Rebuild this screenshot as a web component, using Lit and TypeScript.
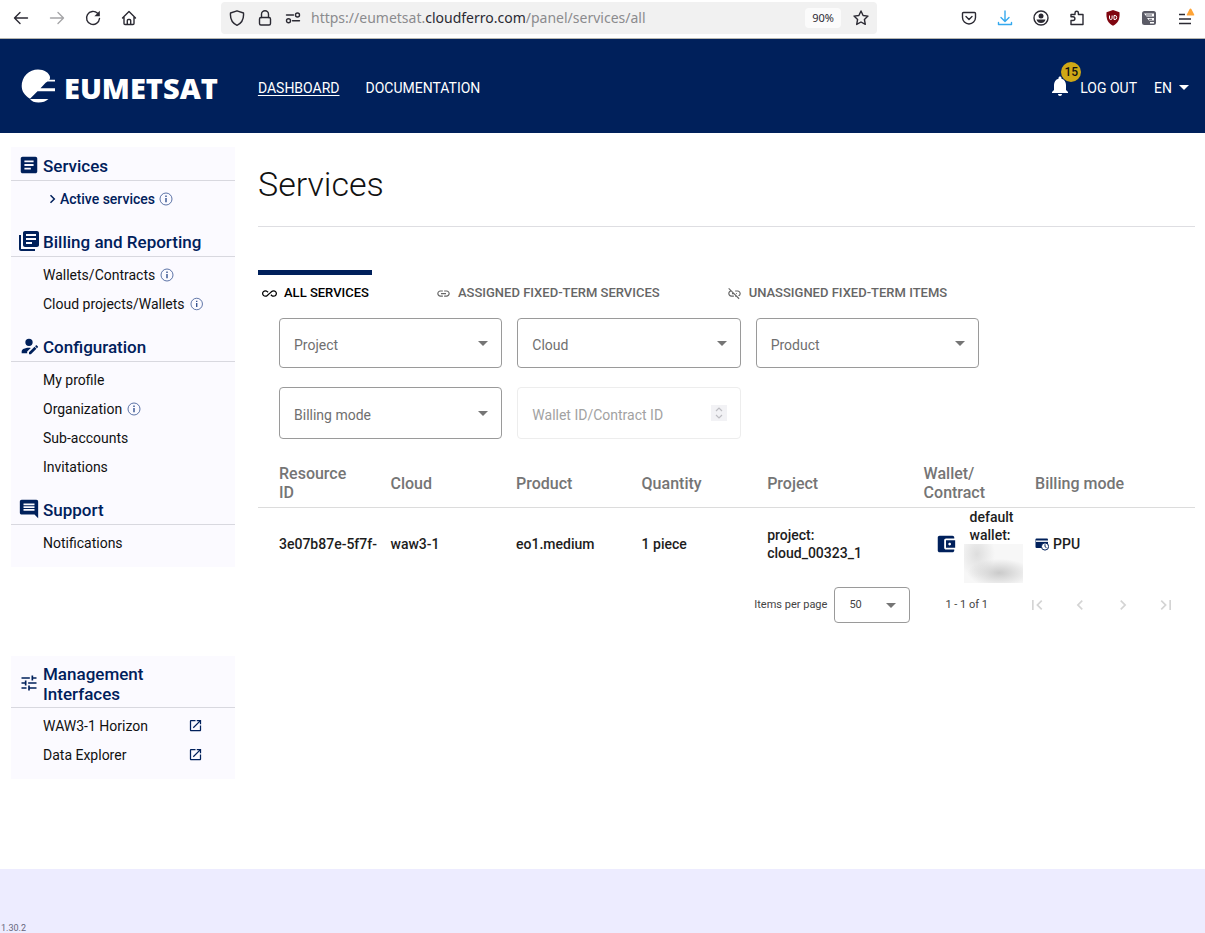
import { LitElement, html, css, svg } from "lit";
import { customElement } from "lit/decorators.js";

const P = {
  article: "M19 3H5c-1.1 0-2 .9-2 2v14c0 1.1.9 2 2 2h14c1.1 0 2-.9 2-2V5c0-1.1-.9-2-2-2zm-5 14H7v-2h7v2zm3-4H7v-2h10v2zm0-4H7V7h10v2z",
  books: "M4 6H2v14c0 1.1.9 2 2 2h14v-2H4V6zm16-4H8c-1.1 0-2 .9-2 2v12c0 1.1.9 2 2 2h12c1.1 0 2-.9 2-2V4c0-1.1-.9-2-2-2zm-1 9H9V9h10v2zm-4 4H9v-2h6v2zm4-8H9V5h10v2z",
  userEdit: "M21.7 13.35l-1 1-2.05-2.05 1-1c.21-.21.56-.21.77 0l1.28 1.28c.21.21.21.56 0 .77M12 18.94l6.06-6.06 2.05 2.05L14.06 21H12v-2.06M12 14c-4.42 0-8 1.79-8 4v2h6v-1.89l4-4c-.66-.08-1.33-.11-2-.11m0-10a4 4 0 0 0-4 4 4 4 0 0 0 4 4 4 4 0 0 0 4-4 4 4 0 0 0-4-4z",
  comment: "M21.99 4c0-1.1-.89-2-1.99-2H4c-1.1 0-2 .9-2 2v12c0 1.1.9 2 2 2h14l4 4-.01-18zM18 14H6v-2h12v2zm0-3H6V9h12v2zm0-3H6V6h12v2z",
  tune: "M3 17v2h6v-2H3zM3 5v2h10V5H3zm10 16v-2h8v-2h-8v-2h-2v6h2zM7 9v2H3v2h4v2h2V9H7zm14 4v-2H11v2h10zm-6-4h2V7h4V5h-4V3h-2v6z",
  open: "M19 19H5V5h7V3H5c-1.11 0-2 .9-2 2v14c0 1.1.89 2 2 2h14c1.1 0 2-.9 2-2v-7h-2v7zM14 3v2h3.59l-9.83 9.83 1.41 1.41L19 6.41V10h2V3h-7z",
  bell: "M12 22c1.1 0 2-.9 2-2h-4c0 1.1.89 2 2 2zm6-6v-5c0-3.07-1.64-5.64-4.5-6.32V4c0-.83-.67-1.5-1.5-1.5s-1.5.67-1.5 1.5v.68C7.63 5.36 6 7.92 6 11v5l-2 2v1h16v-1l-2-2z",
  infinite: "M18.6 6.62c-1.44 0-2.8.56-3.77 1.53L12 10.66 10.48 12h.01L7.8 14.39c-.64.64-1.49.99-2.4.99-1.87 0-3.39-1.51-3.39-3.38S3.53 8.62 5.4 8.62c.91 0 1.76.35 2.44 1.03l1.13 1 1.51-1.34L9.22 8.2C8.2 7.18 6.84 6.62 5.4 6.62 2.42 6.62 0 9.04 0 12s2.42 5.38 5.4 5.38c1.44 0 2.8-.56 3.77-1.53l2.83-2.5.01.01L13.52 12h-.01l2.69-2.39c.64-.64 1.49-.99 2.4-.99 1.87 0 3.39 1.51 3.39 3.38s-1.52 3.38-3.39 3.38c-.9 0-1.76-.35-2.44-1.03l-1.14-1.01-1.51 1.34 1.27 1.12c1.02 1.01 2.37 1.57 3.82 1.57 2.98 0 5.4-2.41 5.4-5.38s-2.42-5.37-5.4-5.37z",
  link: "M3.9 12c0-1.71 1.39-3.1 3.1-3.1h4V7H7c-2.76 0-5 2.24-5 5s2.24 5 5 5h4v-1.9H7c-1.71 0-3.1-1.39-3.1-3.1zM8 13h8v-2H8v2zm9-6h-4v1.9h4c1.71 0 3.1 1.39 3.1 3.1s-1.39 3.1-3.1 3.1h-4V17h4c2.76 0 5-2.24 5-5s-2.24-5-5-5z",
  linkOff: "M17 7h-4v1.9h4c1.71 0 3.1 1.39 3.1 3.1 0 1.43-.98 2.63-2.31 2.98l1.46 1.46C20.88 15.61 22 13.95 22 12c0-2.76-2.24-5-5-5zm-1 4h-2.19l2 2H16zM2 4.27l3.11 3.11C3.29 8.12 2 9.91 2 12c0 2.76 2.24 5 5 5h4v-1.9H7c-1.71 0-3.1-1.39-3.1-3.1 0-1.59 1.21-2.9 2.76-3.07L8.73 11H8v2h2.73L13 15.27V17h1.73l4.01 4L20 19.74 3.27 3 2 4.27z",
  wallet: "M21 18v1c0 1.1-.9 2-2 2H5c-1.11 0-2-.9-2-2V5c0-1.1.89-2 2-2h14c1.1 0 2 .9 2 2v1h-9c-1.11 0-2 .9-2 2v8c0 1.1.89 2 2 2h9zm-9-2h10V8H12v8zm4-2.5c-.83 0-1.5-.67-1.5-1.5s.67-1.5 1.5-1.5 1.5.67 1.5 1.5-.67 1.5-1.5 1.5z",
  first: "M18.41 16.59L13.82 12l4.59-4.59L17 6l-6 6 6 6zM6 6h2v12H6z",
  prev: "M15.41 7.41L14 6l-6 6 6 6 1.41-1.41L10.83 12z",
  next: "M10 6L8.59 7.41 13.17 12l-4.58 4.59L10 18l6-6z",
  last: "M5.59 7.41L10.18 12l-4.59 4.59L7 18l6-6-6-6zM16 6h2v12h-2z",
};

const icon = (d: string, size: number) =>
  html`<svg width=${size} height=${size} viewBox="0 0 24 24" fill="currentColor" aria-hidden="true"><path d=${d}></path></svg>`;

const line = (body: unknown, w = 16, h = 16) =>
  html`<svg width=${w} height=${h} viewBox="0 0 ${w} ${h}" fill="none" stroke="currentColor" stroke-width="1.4" stroke-linecap="round" stroke-linejoin="round" aria-hidden="true">${body}</svg>`;

const caret = html`<svg class="caret" width="10" height="5" viewBox="0 0 10 5" fill="currentColor" aria-hidden="true"><path d="M0 0h10L5 5z"></path></svg>`;

const info = html`<svg width="14" height="14" viewBox="0 0 14 14" fill="none" stroke="#33508f" aria-hidden="true"><circle cx="7" cy="7" r="6" stroke-width=".8"></circle><path d="M7 6v4.200M7 3.600v1.300" stroke-width="1.400"></path></svg>`;

@customElement("browser-bar")
export class BrowserBar extends LitElement {
  static styles = css`
    :host { display: block; font-family: "Noto Sans", sans-serif; color: #2b2a33; }
    .bar { display: grid; grid-template-columns: 221px minmax(0, 656px) 1fr; height: 38px; align-items: start; background: #fff; border-bottom: 1px solid #b5b5ae; }
    .group { display: flex; align-items: center; height: 36px; }
    .left { padding-left: 13px; gap: 20px; }
    .right { justify-content: flex-end; padding-right: 10px; gap: 20px; }
    button { display: flex; padding: 0; border: 0; background: none; color: inherit; }
    .off { color: #a5a5a8; }
    .sky { color: #35a9ee; }
    .address { display: flex; align-items: center; gap: 10px; height: 32px; margin-top: 2px; padding: 0 8px; border-radius: 4px; background: #f1f1f1; }
    .flags { display: flex; gap: 12px; }
    .url { flex: 1; min-width: 0; margin: 0; font-size: 14px; line-height: 20px; color: #8b8b8e; white-space: nowrap; }
    .url b { font-weight: 400; color: #2b2a33; }
    .zoom { padding: 0 7px; margin-right: 2px; border-radius: 4px; background: #fbfbfb; font: 11px/20px "Noto Sans", sans-serif; }
  `;
  render() {
    return html`
      <nav class="bar" aria-label="Browser">
        <div class="group left">
          <button aria-label="Back">${line(svg`<path d="M1.500 8h13M7 2.500L1.500 8L7 13.500"></path>`)}</button>
          <button class="off" aria-label="Forward">${line(svg`<path d="M14.500 8h-13M9 2.500L14.500 8L9 13.500"></path>`)}</button>
          <button aria-label="Reload">${line(svg`<path d="M12.600 3.300A6.500 6.500 0 1 0 14.500 8.500"></path><path d="M14.800 .8v5.400H9.400z" fill="currentColor" stroke="none"></path>`)}</button>
          <button aria-label="Home">${line(svg`<path d="M1.500 8L8 1.500L14.500 8M3 7v6.500q0 1 1 1h8q1 0 1-1V7M6.300 14.500v-4q0-1 1-1h1.400q1 0 1 1v4"></path>`)}</button>
        </div>
        <div class="address">
          <div class="flags">
            ${line(svg`<path d="M8 .8L14.500 3c.5 6-1.500 10-6.500 12.300C3 13 1 9 1.500 3z"></path>`)}
            ${line(svg`<rect x="2.500" y="7.500" width="11" height="7.500" rx="1.500"></rect><path d="M4.500 7.500V4.300a3.500 3.500 0 0 1 7 0v3.200"></path>`)}
            ${line(svg`<path d="M1.500 5h7M7.500 10.800h7"></path><circle cx="12.500" cy="5" r="2"></circle><circle cx="3.500" cy="10.800" r="2"></circle>`)}
          </div>
          <p class="url">https://eumetsat.<b>cloudferro.com</b>/panel/services/all</p>
          <button class="zoom">90%</button>
          <button aria-label="Bookmark">${line(svg`<path d="M8 1l2.100 4.500 4.900.6-3.600 3.400.9 4.900L8 12l-4.300 2.400.9-4.900L1 6.100l4.900-.6z"></path>`)}</button>
        </div>
        <div class="group right">
          <button aria-label="Pocket">${line(svg`<path d="M2.500 2.500h11q1 0 1 1V7.500a6.500 6.500 0 0 1-13 0V3.500q0-1 1-1zM5 6.500l3 3 3-3"></path>`)}</button>
          <button class="sky" aria-label="Downloads">${line(svg`<path d="M8 1v10M4 7.500L8 11.500l4-4M1.500 12.500v2h13v-2"></path>`)}</button>
          <button aria-label="Account">${line(svg`<circle cx="8" cy="8" r="7"></circle><circle cx="8" cy="6" r="2.500" fill="currentColor" stroke="none"></circle><path d="M3.500 9.500h9q-1 3.500-4.500 3.500T3.500 9.500z" fill="currentColor" stroke="none"></path>`)}</button>
          <button aria-label="Extensions">${line(svg`<path d="M2 14.500v-4h2a1.800 1.800 0 0 0 0-3.800H2V4.500h4V3a1.700 1.700 0 0 1 3.400 0v1.500h4.600v10z"></path>`)}</button>
          <button aria-label="Content blocker"><svg width="16" height="16" viewBox="0 0 16 16" aria-hidden="true"><path d="M8 0l6.500 2.300c.5 7-1.500 11-6.500 13.500C3 13.300 1 9.300 1.500 2.300z" fill="#800610"></path><path d="M4.500 5.500v2.700q0 1.300 1.300 1.300t1.300-1.300V5.500M9 5.500v4h1q1.700 0 1.700-2t-1.700-2z" stroke="#fff" fill="none"></path></svg></button>
          <button aria-label="Notes"><svg width="16" height="16" viewBox="0 0 16 16" aria-hidden="true"><rect x="1" y="1" width="14" height="14" rx="2.500" fill="#5b5b66"></rect><path d="M3 3.500h10v3H5.500zM6 8h7v2.500H8zM9 12h4v1.500H9z" fill="#fff"></path><path d="M5 5h6M8 9.300h3" stroke="#5b5b66"></path></svg></button>
          <button aria-label="Menu"><svg width="18" height="22" viewBox="0 0 18 22" aria-hidden="true"><path d="M2 7.500h6M2 12h12M2 16.500h12" stroke="#2b2a33" stroke-width="1.400" fill="none"></path><path d="M13.500 1.500q.6 0 1 .8l2.700 5.200q.5 1-.6 1h-6.200q-1.100 0-.6-1l2.700-5.200q.4-.8 1-.8z" fill="#ffa436"></path></svg></button>
        </div>
      </nav>`;
  }
}

@customElement("site-header")
export class SiteHeader extends LitElement {
  static styles = css`
    :host { display: block; background: #00205b; color: #fff; font-family: Roboto, sans-serif; }
    .header { display: flex; align-items: center; height: 94px; padding: 0 16px 0 21px; }
    .logo { display: flex; align-items: center; gap: 8px; color: #fff; text-decoration: none; }
    .name { font: 800 29px/36px "Open Sans", sans-serif; padding-top: 4px; }
    nav { display: flex; gap: 26px; margin-left: 40px; padding-top: 3px; flex: 1; }
    a { color: #fff; font-size: 14px; line-height: 20px; text-decoration: none; }
    .current { text-decoration: underline; text-underline-offset: 2px; }
    .tools { display: flex; align-items: center; gap: 17px; padding-top: 3px; }
    .alerts { position: relative; display: flex; padding: 0; border: 0; background: none; color: #fff; margin-right: -9px; margin-top: -3px; }
    .count { position: absolute; left: 13px; top: -12px; width: 20px; border-radius: 50%; background: #cfa816; color: #111; font: 500 12px/20px Roboto, sans-serif; text-align: center; }
    .lang { display: flex; align-items: center; gap: 7px; padding: 0; border: 0; background: none; color: #fff; font: 14px/20px Roboto, sans-serif; }
  `;
  render() {
    return html`
      <header class="header">
        <a class="logo" href="#home">
          <svg width="35" height="36" viewBox="0 0 35 36" aria-hidden="true">
            <path d="M9 30.800C3.500 27.500.7 23 .7 18A16.300 16.300 0 0 1 17 1.500c6 0 11.500 3.500 12 7.500q.3 1.700-.7 2.700H34v1.800h-7.500q-2 1-3.500 3l-3.500 3.800H34v3H16.500z" fill="#fff"></path>
            <path d="M9 31h18.500q-4 3.500-10 3.500T9 31z" fill="#fff"></path>
          </svg>
          <span class="name">EUMETSAT</span>
        </a>
        <nav aria-label="Main">
          <a class="current" href="#dashboard">DASHBOARD</a>
          <a href="#documentation">DOCUMENTATION</a>
        </nav>
        <div class="tools">
          <button class="alerts" aria-label="Notifications">${icon(P.bell, 24)}<span class="count">15</span></button>
          <a href="#logout">LOG OUT</a>
          <button class="lang">EN ${caret}</button>
        </div>
      </header>`;
  }
}

type Item = { text: string; info?: boolean; active?: boolean; external?: boolean };
type Section = { title: string; icon: string; size: number; items: Item[] };

const sections: Section[] = [
  { title: "Services", icon: P.article, size: 22, items: [{ text: "Active services", info: true, active: true }] },
  { title: "Billing and Reporting", icon: P.books, size: 24, items: [{ text: "Wallets/Contracts", info: true }, { text: "Cloud projects/Wallets", info: true }] },
  { title: "Configuration", icon: P.userEdit, size: 22, items: [{ text: "My profile" }, { text: "Organization", info: true }, { text: "Sub-accounts" }, { text: "Invitations" }] },
  { title: "Support", icon: P.comment, size: 22, items: [{ text: "Notifications" }] },
];

const management: Section[] = [
  { title: "Management Interfaces", icon: P.tune, size: 20, items: [{ text: "WAW3-1 Horizon", external: true }, { text: "Data Explorer", external: true }] },
];

@customElement("side-menu")
export class SideMenu extends LitElement {
  static styles = css`
    :host { display: flex; flex-direction: column; gap: 89px; font-family: Roboto, sans-serif; }
    .card { background: #fbfaff; }
    .head { display: flex; align-items: center; gap: 2px; min-height: 33px; padding: 0 64px 0 5px; border-bottom: 1px solid #d8d8df; color: #00205b; white-space: nowrap; }
    .mark { display: flex; justify-content: center; width: 25px; padding-top: 3px; flex: none; }
    h2 { margin: 0 0 -1px; padding: 8px 0 4px; font-size: 17px; line-height: 20px; font-weight: 500; }
    .tall .head { white-space: normal; }
    ul { margin: 0; padding: 3px 0 10px; list-style: none; }
    li { display: flex; align-items: center; gap: 5px; height: 29px; padding: 0 32px; }
    a { color: #111; font-size: 14px; line-height: 20px; text-decoration: none; white-space: nowrap; }
    .active { padding-left: 38px; gap: 4px; }
    .active a { color: #00205b; font-weight: 500; }
    .external { justify-content: space-between; color: #00205b; }
  `;
  private section(s: Section) {
    return html`
      <div class="head"><span class="mark">${icon(s.icon, s.size)}</span><h2>${s.title}</h2></div>
      <ul>
        ${s.items.map((i) => html`
          <li class=${i.active ? "active" : i.external ? "external" : "plain"}>
            ${i.active ? html`<svg width="7" height="10" viewBox="0 0 7 10" fill="none" stroke="#00205b" stroke-width="1.500" aria-hidden="true"><path d="M1.500 1.200L5.300 5L1.500 8.800"></path></svg>` : ""}
            <a href="#item">${i.text}</a>
            ${i.info ? info : ""}
            ${i.external ? icon(P.open, 15) : ""}
          </li>`)}
      </ul>`;
  }
  render() {
    return html`
      <nav class="card" aria-label="Panel">${sections.map((s) => this.section(s))}</nav>
      <nav class="card tall" aria-label="Management interfaces">${management.map((s) => this.section(s))}</nav>`;
  }
}

@customElement("services-view")
export class ServicesView extends LitElement {
  static styles = css`
    :host { display: block; font-family: Roboto, sans-serif; color: #222; }
    h1 { margin: 0; padding: 13px 0 18px; border-bottom: 1px solid #dedee2; font-size: 34px; line-height: 48px; font-weight: 300; color: #111; }
    .tabs { display: flex; gap: 60px; margin-top: 43px; }
    .tab { display: flex; align-items: center; gap: 7px; padding: 9px 3px 11px 4px; border: 0; border-top: 5px solid transparent; background: none; color: #666; font: 500 13px/18px Roboto, sans-serif; white-space: nowrap; }
    .tab.on { border-top-color: #00205b; color: #000; }
    .filters { display: grid; grid-template-columns: repeat(3, 1fr); gap: 19px 15px; max-width: 700px; margin: 5px 0 0 21px; }
    .field { position: relative; display: flex; color: #757575; }
    .field .caret { position: absolute; right: 14px; top: 50%; margin-top: -2px; pointer-events: none; }
    select, input { box-sizing: border-box; width: 100%; min-height: 50px; margin: 0; padding: 3px 14px 0; appearance: none; border: 1px solid #9a9a9a; border-radius: 4px; background: #fff; color: #6f6f6f; font: 14px/20px Roboto, sans-serif; }
    input { min-height: 52px; border-color: #ededed; color: #a2a2a2; }
    input::placeholder { color: #a2a2a2; opacity: 1; }
    .spin { position: absolute; right: 14px; top: 18px; display: flex; padding: 1px; background: #f2f2f5; color: #bdbdc2; }
    table { width: 100%; margin-top: 24px; border-collapse: collapse; table-layout: fixed; }
    th { padding: 1px 0 5px; border-bottom: 1px solid #dcdcdc; text-align: left; vertical-align: middle; font-size: 16px; line-height: 19px; font-weight: 500; color: #757575; }
    td { padding: 0 0 3px; vertical-align: middle; font-size: 14px; line-height: 18px; font-weight: 500; color: #1d1d1d; }
    .flush { padding: 0; }
    th:first-child, td:first-child { padding-left: 21px; }
    .resource, .walletcol { width: 11.900%; }
    .short { width: 13.400%; }
    .project { width: 16.700%; }
    .wallet { display: flex; align-items: center; gap: 7px; padding-left: 11px; color: #00205b; }
    .wallet p { margin: 0; padding-left: 6px; color: #1d1d1d; }
    .wallet svg { flex: none; padding-bottom: 4px; }
    .hidden { width: 59px; height: 39px; background: radial-gradient(ellipse 32px 14px at 60% 74%, #cacaca, transparent), radial-gradient(ellipse 18px 24px at 22% 26%, #dedede, transparent), #f7f7f7; }
    .mode { display: flex; align-items: center; gap: 4px; }
    .pager { display: flex; align-items: center; justify-content: flex-end; margin-top: 4px; padding-right: 19px; font-size: 11px; line-height: 16px; color: #444; }
    .size { position: relative; display: flex; width: 76px; margin: 0 35px 0 7px; color: #757575; }
    .size select { min-height: 36px; padding: 0 14px; font-size: 11px; color: #444; }
    .size .caret { position: absolute; right: 14px; top: 16px; pointer-events: none; }
    .steps { display: flex; gap: 23px; margin-left: 39px; }
    .steps button { display: flex; padding: 0; border: 0; background: none; color: #d4d4d4; }
  `;
  private select(text: string) {
    return html`<div class="field"><select aria-label=${text}><option>${text}</option></select>${caret}</div>`;
  }
  render() {
    return html`
      <h1>Services</h1>
      <div class="tabs" role="tablist">
        <button class="tab on" role="tab" aria-selected="true">${icon(P.infinite, 15)}ALL SERVICES</button>
        <button class="tab" role="tab" aria-selected="false">${icon(P.link, 15)}ASSIGNED FIXED-TERM SERVICES</button>
        <button class="tab" role="tab" aria-selected="false">${icon(P.linkOff, 15)}UNASSIGNED FIXED-TERM ITEMS</button>
      </div>
      <div class="filters">
        ${["Project", "Cloud", "Product", "Billing mode"].map((t) => this.select(t))}
        <div class="field">
          <input type="text" aria-label="Wallet ID/Contract ID" placeholder="Wallet ID/Contract ID" disabled />
          <span class="spin"><svg width="14" height="14" viewBox="0 0 14 14" fill="none" stroke="currentColor" stroke-width="1.200" aria-hidden="true"><path d="M4 5l3-3 3 3M4 9l3 3 3-3"></path></svg></span>
        </div>
      </div>
      <table>
        <thead>
          <tr>
            <th class="resource">Resource<br />ID</th>
            <th class="short">Cloud</th>
            <th class="short">Product</th>
            <th class="short">Quantity</th>
            <th class="project">Project</th>
            <th class="walletcol">Wallet/<br />Contract</th>
            <th>Billing mode</th>
          </tr>
        </thead>
        <tbody>
          <tr>
            <td>3e07b87e-5f7f-</td>
            <td>waw3-1</td>
            <td>eo1.medium</td>
            <td>1 piece</td>
            <td>project:<br />cloud_00323_1</td>
            <td class="flush"><div class="wallet">${icon(P.wallet, 22)}<div><p>default<br />wallet:</p><div class="hidden"></div></div></div></td>
            <td><div class="mode"><svg width="14" height="14" viewBox="0 0 14 14" aria-hidden="true"><path d="M1.500 1.500h10.500q1 0 1 1v8.500h-11.500q-1 0-1-1v-7.500q0-1 1-1z" fill="#00205b"></path><path d="M1 4.200h12" stroke="#fff" stroke-width="1.400"></path><circle cx="10" cy="9.500" r="3.600" fill="#fff" stroke="#00205b"></circle><path d="M10 7.300v2.400l1.500 1" fill="none" stroke="#00205b"></path></svg>PPU</div></td>
          </tr>
        </tbody>
      </table>
      <div class="pager">
        <label for="size">Items per page</label>
        <div class="size"><select id="size"><option>50</option></select>${caret}</div>
        <span>1 - 1 of 1</span>
        <div class="steps">
          <button disabled aria-label="First page">${icon(P.first, 20)}</button>
          <button disabled aria-label="Previous page">${icon(P.prev, 20)}</button>
          <button disabled aria-label="Next page">${icon(P.next, 20)}</button>
          <button disabled aria-label="Last page">${icon(P.last, 20)}</button>
        </div>
      </div>`;
  }
}

@customElement("app-root")
export class AppRoot extends LitElement {
  static styles = css`
    :host { display: flex; flex-direction: column; min-height: 100vh; background: #fff; }
    .layout { display: grid; grid-template-columns: 224px minmax(0, 1fr); gap: 23px; flex: 1; padding: 14px 10px 90px 11px; }
    footer { display: flex; align-items: flex-end; height: 64px; padding-left: 1px; background: #edecff; color: #66667c; font: 9px/9px Roboto, sans-serif; }
  `;
  render() {
    return html`
      <browser-bar></browser-bar>
      <site-header></site-header>
      <div class="layout">
        <side-menu></side-menu>
        <main><services-view></services-view></main>
      </div>
      <footer>1.30.2</footer>`;
  }
}
